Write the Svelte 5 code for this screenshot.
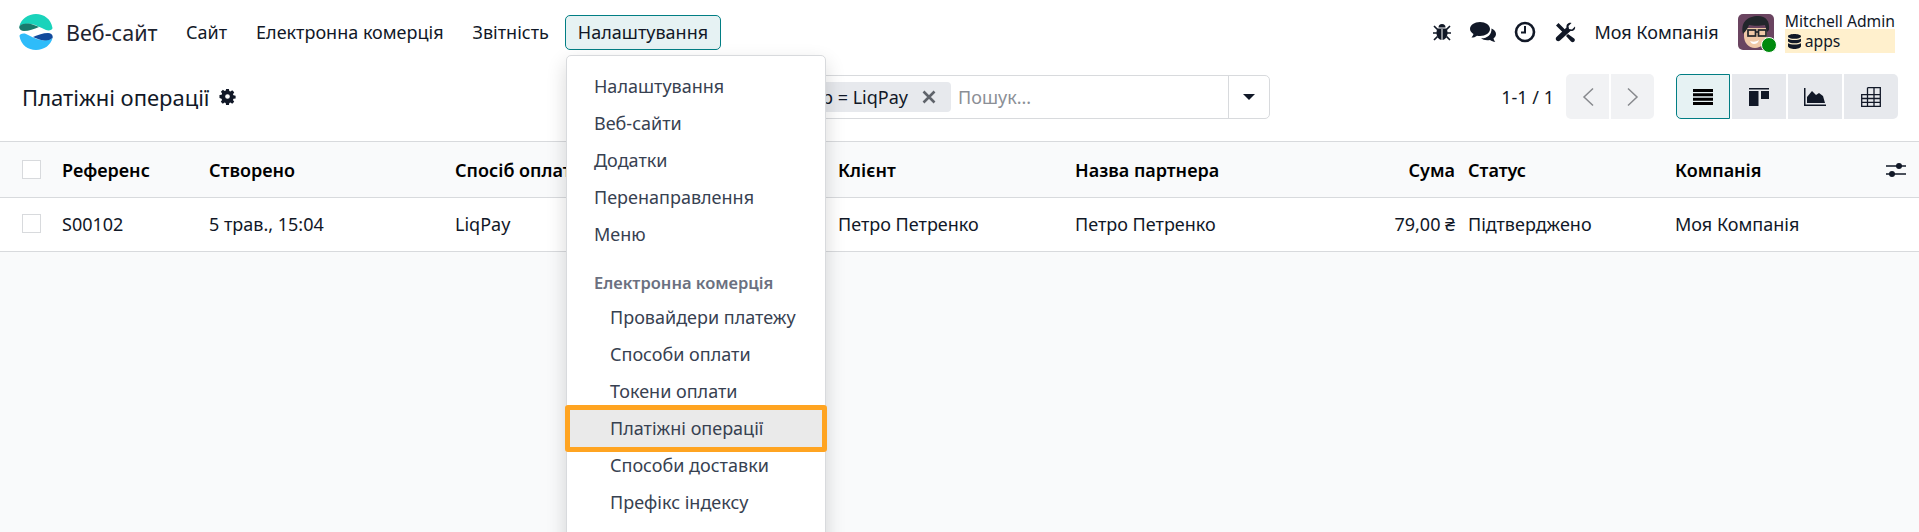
<script lang="ts">
  const navItems = ["Сайт", "Електронна комерція", "Звітність"];
  const topMenu = ["Налаштування", "Веб-сайти", "Додатки", "Перенаправлення", "Меню"];
  const shopMenu = [
    "Провайдери платежу",
    "Способи оплати",
    "Токени оплати",
    "Платіжні операції",
    "Способи доставки",
    "Префікс індексу",
  ];
  const columns = [
    { label: "Референс", value: "S00102" },
    { label: "Створено", value: "5 трав., 15:04" },
    { label: "Спосіб оплати", value: "LiqPay" },
    { label: "Клієнт", value: "Петро Петренко" },
    { label: "Назва партнера", value: "Петро Петренко" },
    { label: "Сума", value: "79,00 ₴", cls: "amount" },
    { label: "Статус", value: "Підтверджено", cls: "status" },
    { label: "Компанія", value: "Моя Компанія" },
  ];
</script>

<div class="page">
  <header class="navbar">
    <svg class="logo" viewBox="0 0 34 36" width="34" height="36">
      <path fill="#1ad3bb" d="M.5 12C2 5 9 0 17 0s15 5 16.5 14c0 2-3.500 3-6.500 2-5-2-9-5-15-6-5-.5-9 0-11.500 2z" />
      <path fill="#1a7a6c" d="M.5 12c2.500-2.500 7.500-3 11.500-2 3 1 6 2 8 3-5 2-10 4-15 4-3 0-5.500-2-4.500-5z" />
      <g transform="rotate(180 17 18)">
        <path fill="#2ebcfa" d="M.5 12C2 5 9 0 17 0s15 5 16.500 14c0 2-3.500 3-6.500 2-5-2-9-5-15-6-5-.5-9 0-11.500 2z" />
        <path fill="#124a9c" d="M.5 12c2.500-2.500 7.500-3 11.500-2 3 1 6 2 8 3-5 2-10 4-15 4-3 0-5.500-2-4.500-5z" />
      </g>
    </svg>
    <span class="brand">Веб-сайт</span>
    <nav class="nav-items">
      {#each navItems as item}
        <span class="nav-item">{item}</span>
      {/each}
      <span class="nav-item active">Налаштування</span>
    </nav>

    <div class="systray">
      <svg class="tray-icon" viewBox="0 0 18 18" width="18" height="18">
        <path d="M5.500 4.500a3.500 3.500 0 0 1 7 0z" />
        <path d="M4.500 5.500h9c.6 1 1 2.500 1 4.500 0 4-2.500 7-5.500 7S3.500 14 3.500 10c0-2 .4-3.500 1-4.500z" />
        <path stroke="#111827" stroke-width="1.700" fill="none" d="M1 3l3.500 3.500M17 3l-3.500 3.500M0 10h4M18 10h-4M1 17l3.500-3.500M17 17l-3.500-3.500" />
        <path stroke="#fff" stroke-width="1" d="M9 6v11" />
      </svg>
      <svg class="tray-icon" viewBox="0 0 26 22" width="26" height="22">
        <path d="M10 1c5.500 0 10 3 10 7s-4.500 7-10 7c-1 0-2-.1-3-.3C5.500 16 3.500 16.500 1.500 16.500c1-1 1.700-2.200 2-3.500C1.500 11.800 0 10 0 8c0-4 4.500-7 10-7z" />
        <path d="M21.500 7.500c2.700 1 4.500 3 4.500 5.500 0 1.800-1 3.400-2.500 4.500.2 1.200.8 2.300 1.800 3.300-2 0-3.800-.6-5.300-1.800-1 .2-1.800.3-2.800.3-2.500 0-4.700-.8-6.200-2 6 .2 11-3.500 10.500-10.300z" />
      </svg>
      <svg class="tray-icon" viewBox="0 0 22 22" width="22" height="22">
        <circle cx="11" cy="11" r="9" fill="none" stroke="#111827" stroke-width="2.600" />
        <path d="M10 5h2v7.500H7v-2h3z" />
      </svg>
      <svg class="tray-icon" viewBox="0 0 21 21" width="21" height="21">
        <path d="M1 3.500L3.500 1 10.500 8l-2.500 2.500zM13 12l-2 2 5 5.500c1 .9 2.300.9 3.200 0 .9-.9.900-2.200 0-3.100z" />
        <path d="M20 4.500l-3 3-3-.5-.5-3 3-3c-2.500-.7-5.500 1-5 4.500L1.500 15c-1 1-1 2.500 0 3.500s2.500 1 3.500 0L15.500 9c3 .5 5.300-2 4.500-4.500z" />
      </svg>
      <span class="company">Моя Компанія</span>
      <div class="avatar">
        <svg viewBox="0 0 36 36" width="36" height="36">
          <rect width="36" height="36" rx="5" fill="#6a4460" />
          <path fill="#f0c9a8" d="M6 14h23v8c0 7-6 12-12 12-7 0-11-6-11-12z" />
          <path fill="#22262b" d="M5 20C2 8 10 2 20 2c8 0 12 5 11 14l-2 2-2-7c-5 1-12 1-16 0-1 3-3 6-6 9z" />
          <g fill="none" stroke="#22262b" stroke-width="1.700">
            <rect x="10" y="16" width="7.500" height="6" />
            <rect x="20.500" y="16" width="7.500" height="6" />
            <path d="M17.500 18h3" />
          </g>
          <path fill="#fff" d="M12 27c3 1 6 1 9-1-1 3-3 4-5 4s-3-1-4-3z" />
        </svg>
        <span class="presence"></span>
      </div>
      <div class="user">
        <span class="user-name">Mitchell Admin</span>
        <span class="db">
          <svg viewBox="0 0 14 16" width="13" height="15">
            <path fill="#111827" d="M7 0c3.500 0 7 1 7 2.500S10.500 5 7 5 0 4 0 2.500 3.500 0 7 0zM0 5c1.500 1 4 1.500 7 1.500S12.500 6 14 5v2.500C14 9 10.500 10 7 10S0 9 0 7.500zM0 9.800c1.500 1 4 1.500 7 1.500s5.500-.5 7-1.500v3C14 14.700 10.500 16 7 16s-7-1.300-7-3.200z" />
          </svg>
          apps
        </span>
      </div>
    </div>
  </header>

  <section class="control-panel">
    <div class="breadcrumb">
      <span>Платіжні операції</span>
      <svg viewBox="-1 -1 18 18" width="17" height="17">
        <path fill="#111827" fill-rule="evenodd" d="M6.500 0h3l.4 2.300 1.200.5 1.900-1.300 2.100 2.100-1.300 1.900.5 1.200 2.300.4v3l-2.300.4-.5 1.200 1.300 1.900-2.100 2.100-1.900-1.300-1.200.5-.4 2.300h-3l-.4-2.300-1.200-.5-1.900 1.300-2.100-2.100 1.300-1.900-.5-1.200L-.5 9.500v-3l2.300-.4.5-1.200L1 3 3.100.900 5 2.200l1.200-.5zM8 5.500a2.500 2.500 0 1 0 0 5 2.500 2.500 0 0 0 0-5z" />
      </svg>
    </div>

    <div class="search">
      <div class="facet">
        <span>Провайдер = LiqPay</span>
        <svg viewBox="0 0 14 14" width="14" height="14">
          <path stroke="#5f636a" stroke-width="2.600" d="M1.500 1.500l11 11M12.500 1.500l-11 11" />
        </svg>
      </div>
      <span class="placeholder">Пошук...</span>
      <span class="search-toggle"></span>
    </div>

    <div class="pager">
      <span class="pager-value">1-1 / 1</span>
      <div class="pager-buttons">
        <button aria-label="prev">
          <svg viewBox="0 0 12 20" width="12" height="20"><path fill="none" stroke="#87898d" stroke-width="1.500" d="M11 1.500L2 10l9 8.500" /></svg>
        </button>
        <button aria-label="next">
          <svg viewBox="0 0 12 20" width="12" height="20"><path fill="none" stroke="#87898d" stroke-width="1.500" d="M1 1.500L10 10l-9 8.500" /></svg>
        </button>
      </div>
    </div>

    <div class="views">
      <button class="view active" aria-label="list">
        <svg viewBox="0 0 20 16" width="20" height="16">
          <path fill="#000" d="M0 0h20v3H0zM0 4.300h20v3H0zM0 8.700h20v3H0zM0 13h20v3H0z" />
        </svg>
      </button>
      <button class="view" aria-label="kanban">
        <svg viewBox="0 0 20 18" width="20" height="18">
          <path fill="#111827" d="M0 0h20v1.500H0zM0 3h9.500v15H0zM12 3h8v8h-8z" />
        </svg>
      </button>
      <button class="view" aria-label="graph">
        <svg viewBox="0 0 22 18" width="22" height="18">
          <path fill="#111827" d="M0 0h1.500v16.500H22V18H0zM3 15V9l5-6 4 4 3-2 4 3 2 7z" />
        </svg>
      </button>
      <button class="view" aria-label="pivot">
        <svg viewBox="0 0 20 20" width="20" height="20">
          <path fill="none" stroke="#111827" stroke-width="1.300" d="M.7 7.700h18.600v11.600H.7zM6.500.7h12.800v18.600M6.500.7v18.600M13 .7v18.600M.7 11.500h18.600M.7 15.400h18.600" />
        </svg>
      </button>
    </div>
  </section>

  <table class="list">
    <colgroup>
      <col style="width: 51px" />
      <col style="width: 147px" />
      <col style="width: 246px" />
      <col style="width: 383px" />
      <col style="width: 237px" />
      <col style="width: 236px" />
      <col style="width: 160px" />
      <col style="width: 204px" />
      <col style="width: 216px" />
      <col />
    </colgroup>
    <thead>
      <tr>
        <th><span class="check"></span></th>
        {#each columns as col}
          <th class={col.cls}>{col.label}</th>
        {/each}
        <th class="opts">
          <svg viewBox="0 0 20 16" width="20" height="16">
            <path stroke="#111827" stroke-width="1.300" d="M0 4h20M0 12h20" />
            <circle cx="13" cy="4" r="3" fill="#111827" />
            <circle cx="6" cy="12" r="3" fill="#111827" />
          </svg>
        </th>
      </tr>
    </thead>
    <tbody>
      <tr>
        <td><span class="check"></span></td>
        {#each columns as col}
          <td class={col.cls}>{col.value}</td>
        {/each}
        <td></td>
      </tr>
    </tbody>
  </table>

  <!-- dropdown hangs over the list -->
  <div class="menu">
    {#each topMenu as item}
      <div class="menu-item">{item}</div>
    {/each}
    <div class="menu-header">Електронна комерція</div>
    {#each shopMenu as item}
      <div class="menu-item sub" class:marked={item === "Платіжні операції"}>{item}</div>
    {/each}
  </div>
</div>

<style>
  :global(body) {
    margin: 0;
    background: #f9fafb;
    font-family: "Noto Sans", "Open Sans", sans-serif;
    font-size: 18px;
    color: #111827;
    overflow: hidden;
  }
  .page {
    position: relative;
    height: 532px;
    overflow: hidden;
  }
  .navbar {
    display: flex;
    align-items: center;
    height: 64px;
    box-sizing: border-box;
    padding: 0 24px 0 19px;
    background: #fff;
  }
  .brand {
    margin-left: 13px;
    font-size: 21.5px;
    color: #1f2430;
  }
  .nav-items {
    display: flex;
    align-items: center;
    margin-left: 14px;
  }
  .nav-item {
    padding: 0 13.5px;
    line-height: 33px;
    border: 1px solid transparent;
    border-radius: 5px;
    white-space: nowrap;
  }
  .nav-item.active {
    margin-left: 2px;
    padding: 0 11.5px;
    background: #e6f2f3;
    border-color: #017e84;
  }
  .systray {
    display: flex;
    align-items: center;
    margin-left: auto;
  }
  .tray-icon {
    margin-right: 18.5px;
    fill: #111827;
  }
  .company {
    white-space: nowrap;
    margin-right: 19px;
  }
  .avatar {
    position: relative;
    width: 36px;
    height: 36px;
    margin-right: 11px;
  }
  .presence {
    position: absolute;
    right: -3px;
    bottom: -3px;
    width: 14px;
    height: 14px;
    background: #008a0e;
    border: 1.500px solid #fff;
    border-radius: 50%;
  }
  .user {
    display: flex;
    flex-direction: column;
    font-size: 15.7px;
    line-height: 20px;
  }
  .user-name {
    white-space: nowrap;
    height: 18px;
  }
  .db {
    display: flex;
    align-items: center;
    gap: 4px;
    height: 24px;
    padding-left: 3px;
    background: #fff0cd;
  }
  .control-panel {
    display: flex;
    align-items: center;
    height: 77px;
    box-sizing: border-box;
    padding: 0 21px 12px 22px;
    background: #fff;
  }
  .breadcrumb {
    display: flex;
    align-items: center;
    gap: 9px;
    width: 598px;
    font-size: 22px;
    white-space: nowrap;
  }
  .search {
    display: flex;
    align-items: center;
    justify-content: flex-end;
    width: 650px;
    height: 44px;
    box-sizing: border-box;
    border: 1px solid #d8dadd;
    border-radius: 5px;
  }
  .facet {
    display: flex;
    align-items: center;
    gap: 14px;
    height: 30px;
    padding: 0 15px;
    background: #e7e9ed;
    border-radius: 4px;
    white-space: nowrap;
  }
  .placeholder {
    flex: 0 0 270px;
    margin-left: 7px;
    color: #8b8f96;
  }
  .search-toggle {
    position: relative;
    flex: 0 0 40px;
    height: 100%;
    border-left: 1px solid #d8dadd;
  }
  .search-toggle::after {
    content: "";
    position: absolute;
    left: 14px;
    top: 18px;
    border: 6px solid transparent;
    border-top: 6px solid #111827;
    border-bottom: 0;
  }
  .pager {
    display: flex;
    align-items: center;
    margin-left: auto;
  }
  .pager-value {
    margin-right: 12px;
  }
  .pager-buttons {
    display: flex;
    gap: 2px;
  }
  button {
    display: flex;
    align-items: center;
    justify-content: center;
    padding: 0;
    border: 0;
    height: 45px;
    background: #f1f2f4;
  }
  .pager-buttons button {
    width: 43px;
  }
  .pager-buttons button:first-child {
    border-radius: 5px 0 0 5px;
  }
  .pager-buttons button:last-child {
    border-radius: 0 5px 5px 0;
  }
  .views {
    display: flex;
    gap: 2px;
    margin-left: 22px;
  }
  .view {
    width: 54px;
    background: #e7e9ed;
  }
  .view:first-child {
    border-radius: 5px 0 0 5px;
  }
  .view:last-child {
    border-radius: 0 5px 5px 0;
  }
  .view.active {
    background: #e6f2f3;
    border: 1px solid #017e84;
  }
  .list {
    width: 100%;
    table-layout: fixed;
    border-collapse: collapse;
    background: #fff;
  }
  th,
  td {
    height: 51px;
    padding: 0 11px 2px;
    text-align: left;
    white-space: nowrap;
    overflow: hidden;
    border-bottom: 1px solid #d8dadd;
  }
  th {
    height: 55px;
    padding-bottom: 0;
    font-weight: 600;
    color: #000;
    background: #f9fafb;
    border-top: 1px solid #d8dadd;
  }
  th:first-child,
  td:first-child {
    padding-left: 22px;
    padding-right: 0;
  }
  .check {
    display: block;
    width: 17px;
    height: 17px;
    background: #fff;
    border: 1px solid #d8dadd;
  }
  .amount {
    text-align: right;
    padding-right: 5px;
  }
  .status {
    padding-left: 8px;
  }
  .opts {
    padding: 0 0 0 6px;
    overflow: visible;
  }
  .opts svg {
    display: block;
  }
  .menu {
    position: absolute;
    left: 566px;
    top: 55px;
    width: 260px;
    height: 520px;
    box-sizing: border-box;
    padding-top: 12px;
    background: #fff;
    border: 1px solid #d8dadd;
    border-radius: 5px;
    box-shadow: 0 8px 20px rgba(0, 0, 0, 0.16);
    color: #374151;
  }
  .menu-item {
    height: 37px;
    line-height: 37px;
    padding-left: 27px;
    white-space: nowrap;
  }
  .menu-item.sub {
    padding-left: 43px;
  }
  .menu-header {
    margin-top: 13px;
    height: 33px;
    line-height: 34px;
    padding-left: 27px;
    font-size: 16.5px;
    font-weight: 600;
    color: #6b7080;
    white-space: nowrap;
  }
  .marked {
    margin: -5px -2px;
    background: #eaeaea;
    outline: 5px solid #ffa421;
    outline-offset: -5px;
    border-radius: 3px;
    position: relative;
    height: 47px;
    line-height: 47px;
    padding-left: 45px !important;
  }
</style>
